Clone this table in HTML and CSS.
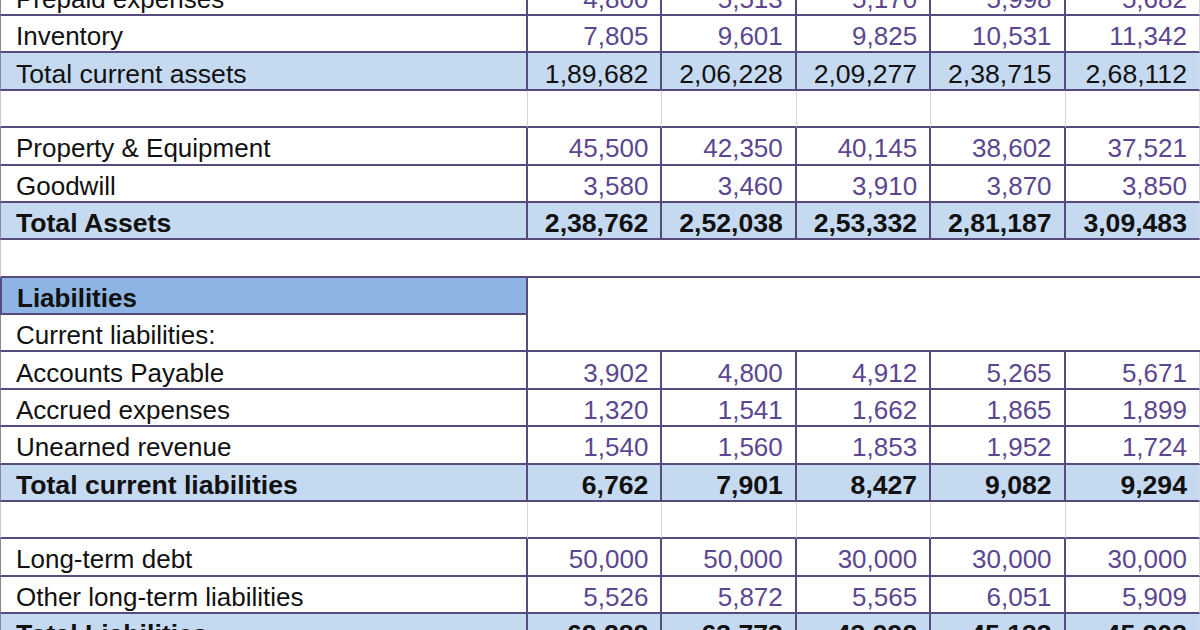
FILE: index.html
```html
<!DOCTYPE html>
<html>
<head>
<meta charset="utf-8">
<link rel="stylesheet" href="styles.css">
</head>
<body>
<div class="sheet">
  <div class="lbl">Prepaid expenses</div>
  <div class="num">4,800</div><div class="num">5,513</div><div class="num">5,170</div><div class="num">5,998</div><div class="num last">5,682</div>

  <div class="lbl">Inventory</div>
  <div class="num">7,805</div><div class="num">9,601</div><div class="num">9,825</div><div class="num">10,531</div><div class="num last">11,342</div>

  <div class="lbl total">Total current assets</div>
  <div class="num total">1,89,682</div><div class="num total">2,06,228</div><div class="num total">2,09,277</div><div class="num total">2,38,715</div><div class="num total last">2,68,112</div>

  <div class="lbl blank"></div>
  <div class="num blank"></div><div class="num blank"></div><div class="num blank"></div><div class="num blank"></div><div class="num blank last"></div>

  <div class="lbl">Property &amp; Equipment</div>
  <div class="num">45,500</div><div class="num">42,350</div><div class="num">40,145</div><div class="num">38,602</div><div class="num last">37,521</div>

  <div class="lbl">Goodwill</div>
  <div class="num">3,580</div><div class="num">3,460</div><div class="num">3,910</div><div class="num">3,870</div><div class="num last">3,850</div>

  <div class="lbl total bold">Total Assets</div>
  <div class="num total bold">2,38,762</div><div class="num total bold">2,52,038</div><div class="num total bold">2,53,332</div><div class="num total bold">2,81,187</div><div class="num total bold last">3,09,483</div>

  <div class="gap"></div>

  <div class="lbl head bold">Liabilities</div>
  <div class="merged"></div>
  <div class="lbl">Current liabilities:</div>

  <div class="lbl">Accounts Payable</div>
  <div class="num">3,902</div><div class="num">4,800</div><div class="num">4,912</div><div class="num">5,265</div><div class="num last">5,671</div>

  <div class="lbl">Accrued expenses</div>
  <div class="num">1,320</div><div class="num">1,541</div><div class="num">1,662</div><div class="num">1,865</div><div class="num last">1,899</div>

  <div class="lbl">Unearned revenue</div>
  <div class="num">1,540</div><div class="num">1,560</div><div class="num">1,853</div><div class="num">1,952</div><div class="num last">1,724</div>

  <div class="lbl total bold">Total current liabilities</div>
  <div class="num total bold">6,762</div><div class="num total bold">7,901</div><div class="num total bold">8,427</div><div class="num total bold">9,082</div><div class="num total bold last">9,294</div>

  <div class="lbl blank"></div>
  <div class="num blank"></div><div class="num blank"></div><div class="num blank"></div><div class="num blank"></div><div class="num blank last"></div>

  <div class="lbl">Long-term debt</div>
  <div class="num">50,000</div><div class="num">50,000</div><div class="num">30,000</div><div class="num">30,000</div><div class="num last">30,000</div>

  <div class="lbl">Other long-term liabilities</div>
  <div class="num">5,526</div><div class="num">5,872</div><div class="num">5,565</div><div class="num">6,051</div><div class="num last">5,909</div>

  <div class="lbl total bold">Total Liabilities</div>
  <div class="num total bold">62,288</div><div class="num total bold">63,773</div><div class="num total bold">43,992</div><div class="num total bold">45,133</div><div class="num total bold last">45,203</div>
</div>
</body>
</html>
```

FILE: styles.css
```css
html, body {
  margin: 0;
  padding: 0;
  background: #ffffff;
  overflow: hidden;
}

.sheet {
  display: grid;
  grid-template-columns: 528px repeat(5, 134.4px);
  grid-auto-rows: 37.375px;
  margin-top: -21.375px;
  font-family: "Liberation Sans", Arial, sans-serif;
  font-size: 26px;
  color: #111111;
}

.lbl, .num {
  box-sizing: border-box;
  display: flex;
  align-items: center;
  padding-top: 6px;
  border-bottom: 2px solid #574a7c;
  white-space: nowrap;
  overflow: hidden;
}

.lbl {
  padding-left: 15px;
  border-left: 1px solid #8a8798;
  border-right: 2px solid #574a7c;
}

.num {
  justify-content: flex-end;
  padding-right: 12px;
  border-right: 2px solid #574a7c;
  color: #5b4690;
}

.num.last {
  border-right: 1px solid #d8d6e4;
}

.total {
  background: #c5d9f1;
  font-size: 26.6px;
}

.num.total {
  color: #111111;
}

.bold {
  font-weight: bold;
}

.blank.num,
.blank.lbl {
  border-right: 1px solid #d6d6d6;
}

.blank.lbl {
  border-left-color: #c8c8d0;
}

.blank.num.last {
  border-right: 1px solid #e6e6e6;
}

.gap {
  grid-column: 1 / 7;
  border-bottom: 2px solid #574a7c;
  border-left: 1px solid #c8c8d0;
  box-sizing: border-box;
}

.head {
  background: #8db4e2;
  border-left: 2px solid #574a7c;
}

.merged {
  grid-column: 2 / 7;
  grid-row: span 2;
  box-sizing: border-box;
  border-bottom: 2px solid #574a7c;
  background: #ffffff;
}
```
